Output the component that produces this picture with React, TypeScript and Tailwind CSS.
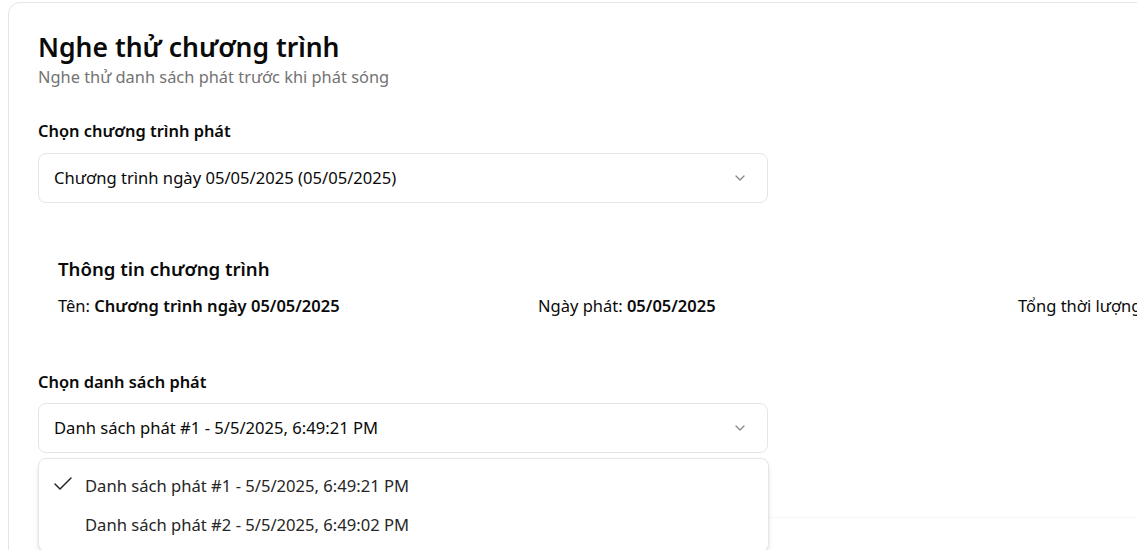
import React from "react";
import { ChevronDown, Check } from "lucide-react";

export default function App() {
  return (
    <div
      className="w-[1137px] h-[550px] overflow-hidden bg-white pl-2 pt-[2px] text-[#0a0a0a]"
      style={{ fontFamily: '"Noto Sans", "Open Sans", sans-serif' }}
    >
      <div className="w-[1520px] border border-[#e5e5e5] rounded-xl px-[29px] pt-[26px] pb-10">
        <h1 className="text-[26.5px] leading-9 font-semibold">Nghe thử chương trình</h1>
        <p className="text-[16.4px] leading-6 text-[#737373]">Nghe thử danh sách phát trước khi phát sóng</p>

        <div className="w-[1460px] mt-[30px]">
          <label className="block text-[16.4px] leading-6 font-semibold mb-[10px]">Chọn chương trình phát</label>
          <div className="w-[730px] h-[50px] border border-[#e5e5e5] rounded-lg flex items-center justify-between pl-[15px] pr-[19px]">
            <span className="text-[16.6px]">Chương trình ngày 05/05/2025 (05/05/2025)</span>
            <ChevronDown size={16} className="text-[#8a8a8a]" strokeWidth={2} />
          </div>

          <div className="mt-[33px] px-5 pt-[19px] pb-5">
            <h2 className="text-[18.6px] leading-7 font-semibold mb-[11px]">Thông tin chương trình</h2>
            <div className="grid grid-cols-[464px_464px_1fr] gap-4 text-[16.5px] leading-6">
              <div>
                Tên: <span className="font-semibold">Chương trình ngày 05/05/2025</span>
              </div>
              <div>
                Ngày phát: <span className="font-semibold">05/05/2025</span>
              </div>
              <div className="whitespace-nowrap">
                Tổng thời lượng: <span className="font-semibold">00:12:45</span>
              </div>
            </div>
          </div>

          <div className="mt-[32px]">
            <label className="block text-[16.4px] leading-6 font-semibold mb-[9px]">Chọn danh sách phát</label>
            <div className="relative w-[730px]">
              <div className="h-[50px] border border-[#e5e5e5] rounded-lg flex items-center justify-between pl-[15px] pr-[19px]">
                <span className="text-[16.6px]">Danh sách phát #1 - 5/5/2025, 6:49:21 PM</span>
                <ChevronDown size={16} className="text-[#8a8a8a]" strokeWidth={2} />
              </div>
              <div className="absolute z-10 left-0 top-[55px] w-[731px] bg-white border border-[#e5e5e5] rounded-lg shadow-md pt-[8px] pb-[6px] px-1">
                <div className="h-[39px] flex items-center text-[16.6px] text-[#262626]">
                  <span className="w-[42px] flex pl-[8px]">
                    <Check size={24} strokeWidth={1.5} className="text-[#262626] -mt-[6px]" />
                  </span>
                  <span>Danh sách phát #1 - 5/5/2025, 6:49:21 PM</span>
                </div>
                <div className="h-[39px] flex items-center text-[16.6px] text-[#262626]">
                  <span className="w-[42px]" />
                  <span>Danh sách phát #2 - 5/5/2025, 6:49:02 PM</span>
                </div>
              </div>
            </div>
            <div className="mt-[64px] border-t border-[#f7f7f7] h-20" />
          </div>
        </div>
      </div>
    </div>
  );
}
